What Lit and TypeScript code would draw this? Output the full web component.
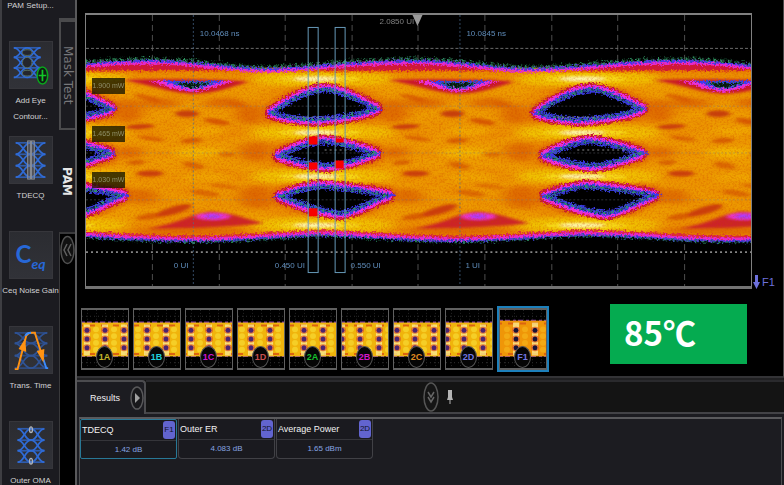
import { LitElement, html, svg, css } from "lit";
import { customElement, property } from "lit/decorators.js";

const PERIOD = 266;
const RAILS = [79, 133, 177, 226];

const EYES = [
  "M272 113 C284 105 303 92 325 90 C338 90 352 97 376 109 C364 114 336 119 315 120 C298 119 282 117 272 113Z",
  "M280 156 C292 150 308 143 325 142 C342 143 360 149 375 154 C360 159 345 165 328 166 C310 165 294 161 280 156Z",
  "M281 197 C292 193 307 188 322 187 C345 189 368 192 388 196 C370 202 355 213 340 214 C318 211 302 205 281 197Z",
];

const STREAKS: [number, number, number, number, number, string, number][] = [
  [187, 114, 12, 3.5, 0, "#bd2a10", 0.8],
  [147, 98, 13, 2.5, 14, "#cf4208", 0.55],
  [140, 127, 14, 2.5, -3, "#c22c0c", 0.8],
  [217, 122, 13, 3, 10, "#cc3c08", 0.65],
  [152, 139, 13, 2, 8, "#d04a05", 0.6],
  [192, 141, 11, 2.5, -4, "#c93c08", 0.6],
  [227, 155, 9, 2.5, 0, "#cf4a08", 0.55],
  [136, 163, 9, 2.5, -4, "#cc4508", 0.6],
  [194, 166, 11, 3, 12, "#cc4508", 0.55],
  [150, 174, 13, 3, 0, "#c22c0c", 0.8],
  [206, 194, 14, 3, 8, "#d04c05", 0.6],
  [225, 187, 14, 2.5, 6, "#d04c05", 0.45],
  [174, 211, 18, 4, -16, "#c0220e", 0.75],
  [150, 217, 14, 3, -8, "#cc3c08", 0.6],
  [237, 105, 10, 3, 10, "#d85c04", 0.6],
];

const SHADES: [number, number, number, number][] = [
  [128, 111, 14, 12],
  [250, 115, 14, 10],
  [255, 152, 16, 10],
  [130, 153, 14, 6],
  [256, 198, 18, 12],
  [142, 197, 16, 8],
  [160, 103, 20, 5],
  [225, 103, 20, 5],
  [190, 232, 60, 4],
];

const TOP_EDGE =
  "M-117 60 C-75 60 -50 68 0 68 C50 68 90 60 149 60 C200 60 225 68 267 68 C315 67 350 60 415 60 C465 60 490 68 533 68 C585 67 620 60 681 60 C720 60 740 64 760 66";
const BOTTOM_EDGE =
  "M80 236 C110 238 150 241 194 241 C240 241 290 236 322 235 C360 236 400 241 460 241 C500 241 545 236 590 235 C640 236 690 241 726 241 C740 241 750 241 760 240";

function transitions() {
  const curves = [];
  for (const from of RAILS) {
    for (const to of RAILS) {
      if (from !== to) {
        curves.push(svg`<path d="M340 ${from} C420 ${from} 490 ${to} 570 ${to}" />`);
      }
    }
  }
  return curves;
}

@customElement("eye-diagram")
class EyeDiagram extends LitElement {
  static styles = css`
    :host { display: block; position: relative; min-height: 0; }
    svg { display: block; position: absolute; inset: 0; width: 100%; height: 100%; }
  `;

  render() {
    const glow = svg`
      <g filter="url(#soft3)">
        ${SHADES.map(([x, y, rx, ry]) => svg`<ellipse cx=${x} cy=${y} rx=${rx} ry=${ry} fill="#d64e04" opacity=".55" />`)}
        ${RAILS.map((y) => svg`<ellipse cx="323" cy=${y} rx="72" ry="9" fill="#f0c800" opacity=".85" />`)}
        <g fill="none" stroke="#f3bb00" stroke-width="6" opacity=".35">${transitions()}</g>
        <ellipse cx="200" cy="153" rx="26" ry="5" fill="#f3c200" opacity=".7" />
        <ellipse cx="205" cy="131" rx="22" ry="4" fill="#f3b800" opacity=".6" />
        <ellipse cx="210" cy="178" rx="24" ry="4" fill="#f3b800" opacity=".5" />
      </g>
      <g filter="url(#soft1)">
        ${RAILS.map(
          (y) => svg`<ellipse cx="320" cy=${y} rx="42" ry="4" fill="#f6da18" opacity=".9" /><ellipse cx="317" cy=${y} rx="22" ry="2" fill="#fdf8b0" />`,
        )}
        ${STREAKS.map(
          ([x, y, rx, ry, a, c, o]) =>
            svg`<ellipse cx=${x} cy=${y} rx=${rx} ry=${ry} fill=${c} opacity=${o} transform="rotate(${a} ${x} ${y})" />`,
        )}
        <path fill="#c9162c" d="M122 80 C150 79 235 79 248 82 C235 86 215 94 192 94 C170 93 148 84 122 80Z" />
        <path fill="#c9162c" opacity=".9" d="M148 229 C175 226 194 213 212 212 C232 213 246 220 264 224 C235 227 190 230 148 229Z" />
        <ellipse cx="213" cy="217" rx="17" ry="3.5" fill="#ec34d8" />
        <ellipse cx="213" cy="217" rx="9" ry="2" fill="#a23cff" />
      </g>`;
    const openings = svg`
      <path fill="#e830d8" d="M148 81 L236 81 C222 84 208 91 192 92 C176 91 162 84 148 81Z" />
      <path fill="#3b3cf0" d="M162 81 L226 81 C214 84 204 89 192 89 C180 89 172 84 162 81Z" />
      <path fill="#06180e" stroke="#2a8a52" stroke-dasharray="3 2" d="M175 83 L212 83 C204 86 198 88 192 88 C186 88 181 85 175 83Z" />
      ${EYES.map(
        (d) => svg`
          <path d=${d} fill="none" stroke="#d84a08" stroke-width="20" stroke-linejoin="round" opacity=".4" filter="url(#soft1)" />
          <path d=${d} fill="none" stroke="#c4152c" stroke-width="14" stroke-linejoin="round" />
          <path d=${d} fill="none" stroke="#f030dc" stroke-width="10" stroke-linejoin="round" />
          <path d=${d} fill="#000" stroke="#3c38ee" stroke-width="5" />
          <path d=${d} fill="none" stroke="#000" stroke-width="1" />
          <path d=${d} fill="none" stroke="#2f9d5c" stroke-width="2" stroke-dasharray="3 2 1 2" />`,
      )}`;
    const offsets = [-PERIOD, 0, PERIOD, 2 * PERIOD];
    return html`
      <svg viewBox="86 15 666 272" preserveAspectRatio="none" role="img" aria-label="PAM4 eye diagram">
        <defs>
          <filter id="soft1"><feGaussianBlur stdDeviation="2 1" /></filter>
          <filter id="soft3" x="-20%" y="-20%" width="140%" height="140%"><feGaussianBlur stdDeviation="7 2" /></filter>
          <filter id="rough" filterUnits="userSpaceOnUse" x="86" y="15" width="666" height="272" color-interpolation-filters="sRGB">
            <feTurbulence type="fractalNoise" baseFrequency=".5" numOctaves="2" seed="4" result="n" />
            <feDisplacementMap in="SourceGraphic" in2="n" scale="7" xChannelSelector="R" yChannelSelector="G" />
            <feGaussianBlur stdDeviation=".5" />
          </filter>
          <filter id="grain" filterUnits="userSpaceOnUse" x="86" y="15" width="666" height="272" color-interpolation-filters="sRGB">
            <feTurbulence type="fractalNoise" baseFrequency=".5" numOctaves="2" seed="9" />
            <feColorMatrix values="0 0 0 0 .8  0 0 0 0 .25  0 0 0 0 0  1.6 0 0 0 -.68" />
          </filter>
          <clipPath id="body">
            <path d="M86 68H752V236H86Z" />
          </clipPath>
          <g id="glow">${glow}</g>
          <g id="openings">${openings}</g>
        </defs>
        <g stroke="#626262" stroke-width="1" stroke-dasharray="6 4" opacity=".8">
          ${[152, 219, 285, 352, 418, 485, 552, 618, 685].map((x) => svg`<path d="M${x}.5 15V287" />`)}
        </g>
        <path d="${BOTTOM_EDGE} L760 200 L80 200Z" fill="#ea8200" />
        <g clip-path="url(#body)">
          <rect x="86" y="15" width="666" height="272" fill="#eb9000" />
          ${offsets.map((dx) => svg`<use href="#glow" x=${dx} />`)}
          <rect x="86" y="15" width="666" height="272" filter="url(#grain)" opacity=".5" />
        </g>
        <g filter="url(#rough)">
          ${offsets.map((dx) => svg`<use href="#openings" x=${dx} />`)}
          <path d="${TOP_EDGE} L760 71 L-117 71Z" fill="#cf1838" />
          <path d="M80 71.5H760" stroke="#e87200" stroke-width="2" />
          <g fill="none">
            <path d=${TOP_EDGE} stroke="#e62bd0" stroke-width="3" transform="translate(0 3)" />
            <path d=${TOP_EDGE} stroke="#4038e8" stroke-width="2" transform="translate(0 1)" />
            <path d=${TOP_EDGE} stroke="#2f9460" stroke-width="3" stroke-dasharray="2 1 1 3" transform="translate(0 -1)" />
            <path d=${BOTTOM_EDGE} stroke="#d8203c" stroke-width="3" transform="translate(0 -3)" />
            <path d=${BOTTOM_EDGE} stroke="#e62bd0" stroke-width="3" transform="translate(0 -1)" />
            <path d=${BOTTOM_EDGE} stroke="#3a38d8" stroke-width="2" transform="translate(0 1)" />
            <path d=${BOTTOM_EDGE} stroke="#278052" stroke-width="2" stroke-dasharray="2 2 1 3" transform="translate(0 2)" />
          </g>
        </g>
        <g fill="none">
          <path d="M86 48.5H752" stroke="#6a6a6a" stroke-dasharray="3 2" />
          <path d="M86 253H752" stroke="#868686" stroke-width="2" stroke-dasharray="2 3" />
          <path d="M86 106.5H752M86 153.5H752M86 200.5H752" stroke="#777a86" stroke-dasharray="2 2" opacity=".4" />
          <path d="M193.5 15V287M460.5 15V287" stroke="#4a6c90" stroke-dasharray="2 2" opacity=".7" />
          <path d="M292 117.5H338M558 117.5H604M325 150.5H352M578 150.5H626" stroke="#8a8a8a" stroke-dasharray="2 3" />
        </g>
        <g fill="#f80000">
          <rect x="309" y="137" width="9" height="8" /><rect x="309" y="163" width="9" height="7" />
          <rect x="309" y="209" width="9" height="8" /><rect x="336" y="139" width="8" height="4" />
          <rect x="335" y="161" width="9" height="8" />
        </g>
        <g fill="none" stroke="#6699b8">
          <rect x="308.5" y="27.5" width="10" height="246" /><rect x="335.5" y="27.5" width="10" height="246" />
        </g>
        <path d="M413 15H423L418 26Z" fill="#9a9a9a" />
      </svg>`;
  }
}

const EYE_COLUMNS: Record<string, number[]> = {
  "1A": [5, 23, 42], "1B": [13, 32], "1C": [5, 23, 42], "1D": [13, 32], "2A": [14, 33],
  "2B": [0, 18, 37], "2C": [3, 21, 40], "2D": [1, 18, 37], F1: [16, 35],
};

@customElement("wave-thumb")
class WaveThumb extends LitElement {
  @property() name = "";
  @property() color = "#fff";

  static styles = css`
    :host { display: block; flex: none; width: 48px; height: 62px; }
    :host([selected]) { outline: 3px solid #1d80bb; outline-offset: -1px; margin-left: 2px; }
    button {
      position: relative; display: block; box-sizing: border-box; width: 100%; height: 100%;
      border: 1px solid #606060; border-width: 2px 1px; padding: 0; background: #000; overflow: hidden;
      font: bold 9px "Liberation Sans", sans-serif;
    }
    svg { display: block; width: 100%; height: 100%; }
    .tag {
      position: absolute; left: 50%; bottom: 0; width: 17px; height: 22px; margin-left: -9px;
      border: 1px solid #555; border-radius: 50%; background: #060606; line-height: 20px; text-align: center;
      box-sizing: border-box;
    }
  `;

  render() {
    const isMath = this.name === "F1";
    const top = isMath ? 11 : 13;
    const base = isMath ? "#ef9608" : "#f0b40c";
    const gaps = EYE_COLUMNS[this.name] ?? [];
    return html`<button>
      <svg viewBox="0 0 46 60" preserveAspectRatio="none" aria-hidden="true">
        <path d="M0 6.5H46M0 54.5H46" stroke="#303030" stroke-dasharray="1 3" />
        <path d="M5.5 0V60M14.5 0V60M23.5 0V60M32.5 0V60M41.5 0V60" stroke="#262626" stroke-dasharray="1 2" />
        <path d="M0 ${top}H46M0 47.5H46" stroke="#7a3aa8" stroke-width="2" stroke-dasharray="3 2 5 3" />
        <rect y=${top} width="46" height=${48 - top} fill=${base} />
        <path d="M0 ${top + 3}H46M0 45.5H46" stroke="#dc6410" stroke-width="2" stroke-dasharray="6 6" stroke-dashoffset=${gaps[0] ?? 0} />
        ${[-9, 9, 27, 46].map((o) =>
          [20, 27, 34, 41].map((y) => svg`<circle cx=${(gaps[0] ?? 0) + o} cy=${y} r="3" fill=${isMath ? "#f4b61c" : "#f8dc35"} opacity=".65" />`),
        )}
        ${gaps.map(
          (x) => svg`<rect x=${x - 3} y=${top + 2} width="6" height=${45 - top} fill="#fae890" opacity=".8" />
          ${[21, 30, 39].map(
            (y) => svg`<ellipse cx=${x} cy=${y} rx="4" ry="3.6" fill="#db5a25" opacity=".75" />
            <ellipse cx=${x} cy=${y} rx="2.4" ry="2.6" fill=${isMath ? "#171338" : "#4c2470"} />`,
          )}`,
        )}
      </svg>
      <span class="tag" style="color:${this.color}">${this.name}</span>
    </button>`;
  }
}

const lattice = (left: number, right: number, rails: number[], opacity = 1) => {
  const mid = (left + right) / 2;
  const bend = (right - left) / 4;
  const wave = (a: number, b: number) =>
    svg`<path d="M${left} ${a}C${left + bend} ${a} ${mid - bend} ${b} ${mid} ${b}S${right - bend} ${a} ${right} ${a}" />`;
  return svg`<g fill="none" stroke="#2f6bd6" stroke-width="1.8" opacity=${opacity}>
    ${rails.map((y) => svg`<path d="M${left} ${y}H${right}" opacity=".75" />`)}
    ${rails.slice(1).map((y, i) => svg`${wave(rails[i], y)}${wave(y, rails[i])}`)}
  </g>`;
};

const ICONS: Record<string, unknown> = {
  contour: svg`${lattice(4, 32, [5, 15, 26, 36])}
    <g fill="#24262c" stroke="#5b7262"><ellipse cx="18" cy="10" rx="5" ry="3" /><ellipse cx="18" cy="20.5" rx="5" ry="5.5" /><ellipse cx="18" cy="31.5" rx="5" ry="3" /></g>
    <ellipse cx="34" cy="34" rx="5.5" ry="9" fill="#101b14" stroke="#09a51c" stroke-width="1.6" />
    <path d="M34 28V40M30 34H38" stroke="#12c828" stroke-width="1.8" />`,
  tdecq: svg`${lattice(6, 37, [5, 17, 29, 41])}<g stroke="#888d96" fill="#777b84" fill-opacity=".45"><rect x="18.5" y="3" width="3" height="40" /><rect x="22.5" y="3" width="3" height="40" /></g>`,
  trans: svg`${lattice(5, 39, [5, 16, 29, 42], 0.6)}
    <path d="M5 43H8L17 8Q19 5 23 5H27" fill="none" stroke="#ff9212" stroke-width="2" />
    <path d="M16 8Q18 5 22 5M35 33L38 42H40" fill="none" stroke="#3a8cff" stroke-width="2" />
    <path d="M26 5L35 33" stroke="#ff9212" stroke-width="2" />
    <path d="M16 11L17 25L9 22ZM28 24L36 22L35 36Z" fill="#ff9212" />`,
  oma: svg`${lattice(8, 36, [6, 18, 29, 41])}<g fill="none" stroke="#aeb3ba" stroke-width="1.5"><ellipse cx="22" cy="7" rx="1.5" ry="3" /><ellipse cx="22" cy="40" rx="1.5" ry="3" /></g>`,
};

const TOOLS = [
  { icon: "contour", label: "Add Eye Contour..." },
  { icon: "tdecq", label: "TDECQ" },
  { icon: "ceq", label: "Ceq Noise Gain" },
  { icon: "trans", label: "Trans. Time" },
  { icon: "oma", label: "Outer OMA" },
];

const CHANNELS = [
  ["1A", "#c5b72c"], ["1B", "#20d0dc"], ["1C", "#cf16cf"], ["1D", "#c75050"], ["2A", "#17c22d"],
  ["2B", "#d318c6"], ["2C", "#e08c20"], ["2D", "#7277e0"], ["F1", "#7277e0"],
];

const RESULTS = [
  { name: "TDECQ", source: "F1", value: "1.42 dB" },
  { name: "Outer ER", source: "2D", value: "4.083 dB" },
  { name: "Average Power", source: "2D", value: "1.65 dBm" },
];

@customElement("app-root")
class AppRoot extends LitElement {
  static styles = css`
    :host {
      display: flex; height: 100vh; overflow: hidden; background: #000; color: #d6d6d6;
      font: 9px/12px "Liberation Sans", sans-serif;
    }
    * { box-sizing: border-box; }
    button { font: inherit; color: inherit; border: 0; padding: 0; background: none; }
    .tools {
      flex: none; width: 59px; border-left: 2px solid #3e3e42; background: #1b1b20;
      display: flex; flex-direction: column; overflow: hidden;
    }
    .tool {
      flex: none; display: flex; flex-direction: column; align-items: center; gap: 4px;
      height: 95px; font-size: 8px; line-height: 16px; color: #d2d2d4; white-space: nowrap;
    }
    .tool.cut { height: 41px; line-height: 12px; }
    .tile {
      display: flex; align-items: center; justify-content: center; flex: none; width: 44px; height: 48px;
      border: 1px solid #36363b; background: linear-gradient(#2b2c31, #313238);
    }
    .tile svg { width: 44px; height: 46px; }
    .ceq { color: #2768d8; font: bold 24px/32px Lato, "Liberation Sans", sans-serif; }
    .ceq sub { font-size: 14px; font-style: italic; line-height: 16px; }
    .caption { text-align: center; }
    .caption.wrap { max-width: 40px; white-space: normal; }
    .tabs { flex: none; width: 16px; display: flex; flex-direction: column; background: #000; }
    .tab {
      writing-mode: vertical-rl; width: 16px; height: 102px; background: #1b1b20; text-align: center;
      font: bold 12px/16px "DejaVu Sans", sans-serif; color: #e6e6e6;
    }
    .tab.idle {
      height: 110px; border: 2px solid #4a4a4c; border-right: 0; font-weight: normal;
      line-height: 14px; color: #77777a;
    }
    .tabtop { height: 20px; background: #1b1b20; border-bottom: 2px solid #4a4a4c; }
    .rail { flex: 1; border-left: 1px solid #39393b; border-top: 2px solid #39393b; padding-top: 1px; }
    .round, .round svg { display: block; width: 16px; height: 30px; }
    .main { flex: 1; min-width: 0; display: flex; flex-direction: column; border-left: 2px solid #59595b; }
    .scope { flex: 1; min-height: 0; display: flex; flex-direction: column; border-right: 1px solid #4a4a4a; border-bottom: 2px solid #333336; }
    .stage { flex: 1; min-height: 0; display: flex; padding-top: 13px; padding-left: 8px; }
    .plot { position: relative; flex: 1; display: flex; border: 1px solid #808080; border-top-width: 2px; border-bottom: 3px solid #737373; overflow: hidden; }
    .plot eye-diagram { flex: 1; }
    .note { position: absolute; transform: translateY(-50%); white-space: nowrap; font-size: 8px; color: #5f8cba; }
    .note.dim { color: #808080; }
    .note.level { background: rgba(22, 20, 0, 0.78); color: #8f8f68; padding: 2px 0; width: 33px; height: 16px; text-align: center; font-size: 7px; }
    .marker { flex: none; width: 31px; display: flex; align-items: flex-end; gap: 2px; color: #6d70dc; font-size: 11px; line-height: 14px; }
    .marker svg { width: 8px; height: 14px; }
    .strip { flex: none; display: flex; align-items: center; gap: 4px; height: 87px; padding: 15px 36px 2px 4px; }
    .temp {
      margin-left: auto; align-self: flex-start; width: 137px; height: 60px; padding-left: 14px; background: #05ab50; color: #fff;
      font: bold 33px/56px "Noto Sans CJK SC", "Noto Sans", sans-serif;
    }
    .results { flex: none; height: 107px; display: flex; flex-direction: column; border-top: 2px solid #202022; background: #1c1c21; }
    .bar { flex: none; display: flex; align-items: stretch; height: 34px; background: #141414; }
    .title {
      display: flex; align-items: center; justify-content: space-between; width: 69px; padding-left: 13px; background: #1c1c21;
      border: 2px solid #4c4c4f; border-left: 0; border-bottom: 0; border-radius: 0 4px 0 0; color: #f0f0f0; margin: 0; font: inherit;
    }
    .title svg { width: 14px; height: 24px; display: block; }
    .barbody { flex: 1; display: flex; align-items: center; justify-content: center; gap: 7px; border-top: 2px solid #2a2a2d; border-bottom: 2px solid #434347; padding-right: 54px; }
    .pin svg { display: block; width: 8px; height: 16px; }
    .cards { flex: 1; margin: 3px 2px 0 2px; border: 1px solid #4d4d50; border-top: 2px solid #5a5a5d; border-bottom: 0; display: flex; align-items: flex-start; gap: 1px; }
    .card { width: 97px; height: 40px; border: 1px solid #414146; border-top: 0; border-radius: 0 0 4px 4px; background: #1a1a1f; margin: 0; }
    .card.on { border: 1px solid #287896; border-radius: 2px; }
    .head { display: flex; justify-content: space-between; align-items: center; height: 21px; padding: 0 1px; border-bottom: 1px solid #35353a; color: #f2f2f2; }
    .src { width: 12px; height: 18px; border-radius: 3px; background: #6264cf; color: #111328; line-height: 18px; text-align: center; font-size: 8px; }
    .value { margin: 0; text-align: center; line-height: 18px; color: #87a5e2; font-size: 8px; }
  `;

  note(text: string, x: number, y: number, kind = "") {
    const left = ((x - 86) / 666) * 100;
    const top = ((y - 15) / 272) * 100;
    return html`<span class="note ${kind}" style="left:${left}%;top:${top}%">${text}</span>`;
  }

  render() {
    return html`
      <nav class="tools" aria-label="Measurements">
        <button class="tool cut">PAM Setup...</button>
        ${TOOLS.map(
          (t) => html`<button class="tool">
            <span class="tile">${t.icon === "ceq"
              ? html`<span class="ceq">C<sub>eq</sub></span>`
              : html`<svg viewBox="0 0 44 46" aria-hidden="true">${ICONS[t.icon]}</svg>`}</span>
            <span class="caption ${t.icon === "contour" ? "wrap" : ""}">${t.label}</span>
          </button>`,
        )}
      </nav>
      <div class="tabs">
        <div class="tabtop"></div>
        <button class="tab idle">Mask Test</button>
        <button class="tab">PAM</button>
        <div class="rail">
          <button class="round" aria-label="Collapse"><svg viewBox="0 0 16 30"><ellipse cx="7.5" cy="15" rx="6.5" ry="13.5" fill="#111" stroke="#505050" stroke-width="1.5" /><path d="M7 9L4 15L7 21M11 9L8 15L11 21" fill="none" stroke="#606060" stroke-width="1.5" /></svg></button>
        </div>
      </div>
      <main class="main">
        <section class="scope">
          <div class="stage">
            <div class="plot">
              <eye-diagram></eye-diagram>
              ${this.note("10.0468 ns", 200, 34)}
              ${this.note("2.0850 UI", 380, 22, "dim")}
              ${this.note("10.0845 ns", 467, 34)}
              ${this.note("1.900 mW", 92, 86, "level")}
              ${this.note("1.465 mW", 92, 134, "level")}
              ${this.note("1.030 mW", 92, 181, "level")}
              ${this.note("0 UI", 174, 267)}
              ${this.note("0.450 UI", 275, 267)}
              ${this.note("0.550 UI", 351, 267)}
              ${this.note("1 UI", 466, 267)}
            </div>
            <div class="marker"><svg viewBox="0 0 8 14" aria-hidden="true"><path d="M3 0H6V7H8L4.5 14L1 7H3Z" fill="#6d70dc" /></svg>F1</div>
          </div>
          <div class="strip">
            ${CHANNELS.map(([n, c]) => html`<wave-thumb name=${n} color=${c} ?selected=${n === "F1"}></wave-thumb>`)}
            <div class="temp">85℃</div>
          </div>
        </section>
        <section class="results">
          <div class="bar">
            <h2 class="title">Results<button aria-label="Run"><svg viewBox="0 0 14 24"><ellipse cx="7" cy="12" rx="6" ry="11" fill="#18181b" stroke="#58585a" stroke-width="1.5" /><path d="M5 7L10 12L5 17Z" fill="#a0a0a0" /></svg></button></h2>
            <div class="barbody">
              <button class="round" aria-label="Minimize"><svg viewBox="0 0 16 30"><ellipse cx="8" cy="15" rx="7" ry="14" fill="#151515" stroke="#555" stroke-width="1.5" /><path d="M5 10L8 15L11 10M5 15L8 20L11 15" fill="none" stroke="#666" stroke-width="1.5" /></svg></button>
              <button class="pin" aria-label="Pin"><svg viewBox="0 0 8 16"><path d="M2 1H6V8L7 11H1L2 8ZM3.5 11H4.5V15H3.5Z" fill="#b4b4b4" /></svg></button>
            </div>
          </div>
          <div class="cards">
            ${RESULTS.map(
              (r, i) => html`<article class="card ${i === 0 ? "on" : ""}">
                <div class="head"><span>${r.name}</span><span class="src">${r.source}</span></div>
                <p class="value">${r.value}</p>
              </article>`,
            )}
          </div>
        </section>
      </main>`;
  }
}
